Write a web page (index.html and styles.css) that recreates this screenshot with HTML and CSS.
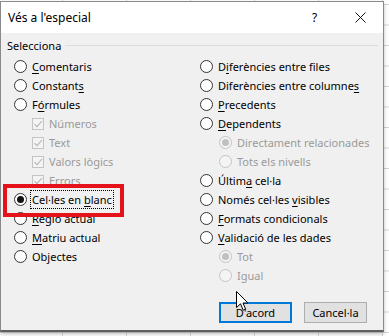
FILE: index.html
```html
<!DOCTYPE html>
<html>
<head>
<meta charset="utf-8">
<title>Vés a l'especial</title>
<link rel="stylesheet" href="styles.css">
</head>
<body>
<div class="sheet">
  <div class="dialog">
    <div class="titlebar">
      <span class="title">Vés a l'especial</span>
      <span class="help">?</span>
      <svg class="close" width="11" height="11" viewBox="0 0 11 11"><path d="M0.5 0.5 L10.5 10.5 M10.5 0.5 L0.5 10.5" stroke="#111" stroke-width="1" fill="none"/></svg>
    </div>
    <div class="body">
      <div class="legend"><span class="legend-text">Selecciona</span><span class="rule"></span></div>
      <div class="cols">
        <div class="col">
          <div class="opt"><span class="radio"></span><span class="lbl"><u>C</u>omentaris</span></div>
          <div class="opt"><span class="radio"></span><span class="lbl">Constant<u>s</u></span></div>
          <div class="opt"><span class="radio"></span><span class="lbl">F<u>ó</u>rmules</span></div>
          <div class="opt sub-check dis"><span class="check"><svg width="12" height="12" viewBox="0 0 12 12"><path d="M2.5 6.2 L5 8.7 L10 3" stroke="#b4b4b4" stroke-width="1.1" fill="none"/></svg></span><span class="lbl">Números</span></div>
          <div class="opt sub-check dis"><span class="check"><svg width="12" height="12" viewBox="0 0 12 12"><path d="M2.5 6.2 L5 8.7 L10 3" stroke="#b4b4b4" stroke-width="1.1" fill="none"/></svg></span><span class="lbl">Text</span></div>
          <div class="opt sub-check dis"><span class="check"><svg width="12" height="12" viewBox="0 0 12 12"><path d="M2.5 6.2 L5 8.7 L10 3" stroke="#b4b4b4" stroke-width="1.1" fill="none"/></svg></span><span class="lbl">Valors lògics</span></div>
          <div class="opt sub-check dis"><span class="check"><svg width="12" height="12" viewBox="0 0 12 12"><path d="M2.5 6.2 L5 8.7 L10 3" stroke="#b4b4b4" stroke-width="1.1" fill="none"/></svg></span><span class="lbl">Errors</span></div>
          <div class="opt"><span class="radio on"></span><span class="lbl focus">Cel·les en <u>b</u>lanc</span></div>
          <div class="opt"><span class="radio"></span><span class="lbl"><u>R</u>egió actual</span></div>
          <div class="opt"><span class="radio"></span><span class="lbl"><u>M</u>atriu actual</span></div>
          <div class="opt"><span class="radio"></span><span class="lbl">Objectes</span></div>
        </div>
        <div class="col">
          <div class="opt"><span class="radio"></span><span class="lbl">D<u>i</u>ferències entre files</span></div>
          <div class="opt"><span class="radio"></span><span class="lbl">Diferències entre columne<u>s</u></span></div>
          <div class="opt"><span class="radio"></span><span class="lbl"><u>P</u>recedents</span></div>
          <div class="opt"><span class="radio"></span><span class="lbl"><u>D</u>ependents</span></div>
          <div class="opt sub-radio dis"><span class="radio on"></span><span class="lbl">Directament relacionades</span></div>
          <div class="opt sub-radio dis"><span class="radio"></span><span class="lbl">Tots els nivells</span></div>
          <div class="opt"><span class="radio"></span><span class="lbl">Últim<u>a</u> cel·la</span></div>
          <div class="opt"><span class="radio"></span><span class="lbl">Només cel·les <u>v</u>isibles</span></div>
          <div class="opt"><span class="radio"></span><span class="lbl"><u>F</u>ormats condicionals</span></div>
          <div class="opt"><span class="radio"></span><span class="lbl"><u>V</u>alidació de les dades</span></div>
          <div class="opt sub-radio dis"><span class="radio on"></span><span class="lbl">Tot</span></div>
          <div class="opt sub-radio dis"><span class="radio"></span><span class="lbl">Igual</span></div>
        </div>
      </div>
      <div class="buttons">
        <button class="btn default">D'acord</button>
        <button class="btn cancel">Cancel·la</button>
      </div>
    </div>
  </div>
  <div class="highlight"></div>
  <svg class="cursor" width="13" height="21" viewBox="0 0 13 21"><path d="M0.5 0.5 L0.5 16.5 L4.5 12.8 L7.2 19.2 L9.6 18.2 L7 12 L12 12 Z" fill="#fff" stroke="#000" stroke-width="1" stroke-linejoin="miter"/></svg>
</div>
</body>
</html>
```
FILE: styles.css
```css
* { box-sizing: border-box; }
html, body { margin: 0; padding: 0; }
body {
  width: 389px;
  height: 336px;
  overflow: hidden;
  font-family: "Noto Sans", "Open Sans", sans-serif;
  font-size: 11px;
  color: #000;
  background-color: #fff;
  background-image:
    linear-gradient(to right, #d4d4d4 1px, transparent 1px),
    linear-gradient(to bottom, #d4d4d4 1px, transparent 1px);
  background-size: 64px 100%, 100% 20.5px;
  background-position: 62px 0, 0 4px;
}
.sheet { position: relative; width: 389px; height: 336px; }
.dialog {
  width: 384px;
  height: 331px;
  margin-top: 1px;
  border: 1px solid #8a8a8a;
  border-bottom: 2px solid #5f5f5f;
  background: #f0f0f0;
  display: flex;
  flex-direction: column;
  box-shadow: 0 2px 4px rgba(0,0,0,0.25);
}
.titlebar {
  height: 31px;
  background: #fff;
  display: flex;
  align-items: center;
  padding-left: 7px;
  flex: none;
}
.title { font-size: 12px; flex: 1; padding-bottom: 1px; }
.help { font-size: 12px; width: 12px; margin-right: 31px; padding-bottom: 1px; }
.close { margin-right: 17px; }
.body {
  flex: 1;
  display: flex;
  flex-direction: column;
  padding: 3px 0 0 13px;
}
.legend {
  height: 18px;
  display: flex;
  align-items: center;
  padding-right: 5px;
}
.legend-text { margin-left: -7px; }
.rule { flex: 1; margin-left: 4px; height: 1px; background: #dcdcdc; }
.cols {
  display: grid;
  grid-template-columns: 186px 1fr;
  margin-top: 3px;
}
.opt {
  height: 19px;
  display: flex;
  align-items: center;
  white-space: nowrap;
}
.radio {
  width: 13px;
  height: 13px;
  border-radius: 50%;
  border: 1px solid #333;
  background: #fff;
  margin-right: 5px;
  flex: none;
  display: flex;
  align-items: center;
  justify-content: center;
}
.radio.on::after {
  content: "";
  width: 7px;
  height: 7px;
  border-radius: 50%;
  background: #111;
}
.sub-check { padding-left: 18px; }
.sub-radio { padding-left: 19px; }
.check {
  width: 12px;
  height: 12px;
  border: 1px solid #c4c4c4;
  background: #f4f4f4;
  margin-right: 5px;
  flex: none;
  display: flex;
}
.check svg { margin: -1px; }
.dis .lbl { color: #9a9a9a; }
.dis .radio { border-color: #c4c4c4; background: #f4f4f4; }
.dis .radio.on::after { background: #c0c0c0; }
.lbl u { text-decoration-thickness: 1px; text-underline-offset: 2px; }
.lbl.focus { outline: 1px dotted #000; outline-offset: 1px; }
.buttons {
  display: flex;
  justify-content: flex-end;
  gap: 12px;
  padding-right: 16px;
  margin-top: 17px;
}
.btn {
  height: 21px;
  font-family: inherit;
  font-size: 11px;
  color: #000;
  background: #e1e1e1;
  border: 1px solid #adadad;
  padding: 0;
}
.btn.default { width: 73px; border: 2px solid #0078d7; }
.btn.cancel { width: 63px; }
.highlight {
  position: absolute;
  left: 3px;
  top: 183px;
  width: 121px;
  height: 33px;
  border: 4px solid #e5121b;
}
.cursor { position: absolute; left: 236px; top: 290px; }
```
